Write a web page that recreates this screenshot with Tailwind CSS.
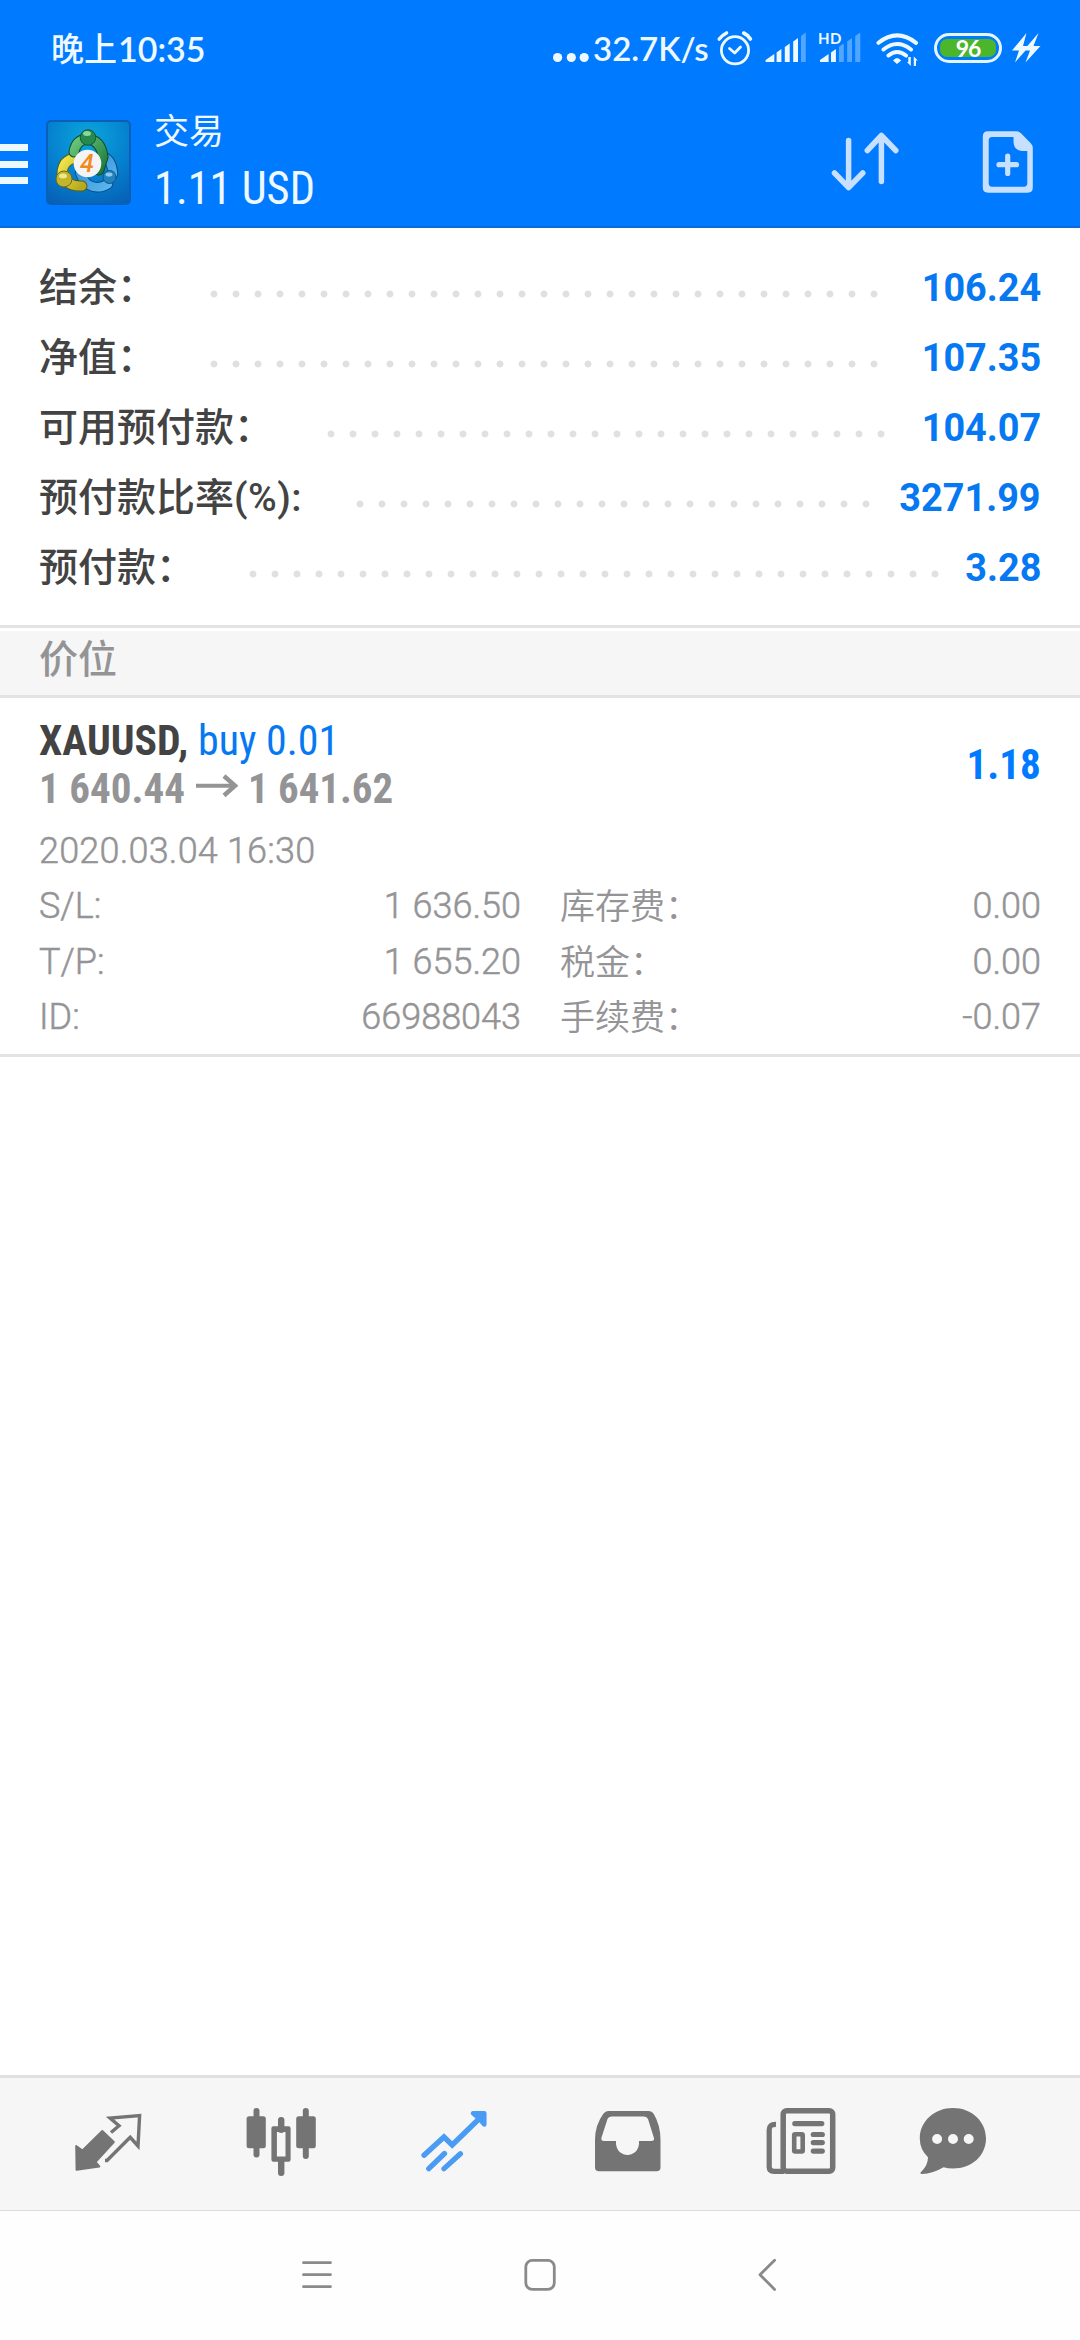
<!DOCTYPE html>
<html lang="zh-CN">
<head>
<meta charset="utf-8">
<title>交易</title>
<script src="https://cdn.jsdelivr.net/npm/@tailwindcss/browser@4"></script>
</head>
<body class="w-[1080px] h-[2340px] overflow-hidden bg-white flex flex-col font-['Roboto','Noto_Sans_CJK_SC',sans-serif] text-[#949496]">

<header class="h-[228px] shrink-0 bg-[#007aff] border-b-2 border-[#0c6ad6] text-[#eef8ff] flex flex-col">
  <!-- system status bar -->
  <div class="h-[98px] flex items-start pt-[28px]">
    <div class="ml-[51px] w-[160px] h-[40px] flex whitespace-nowrap leading-[40px]">
      <span class="w-[67px] text-[33px] font-medium font-['Noto_Sans_CJK_SC',sans-serif] leading-[38px]">晚上</span>
      <span class="text-[34px] font-['Lato',sans-serif] font-semibold leading-[41px]">10:35</span>
    </div>
    <svg class="ml-[341px] w-[40px] h-[40px]" viewBox="552 28 40 40" fill="currentColor"><circle cx="557.6" cy="57.5" r="4.6"/><circle cx="571.3" cy="57.5" r="4.6"/><circle cx="584.2" cy="57.5" r="4.6"/></svg>
    <span class="ml-[1px] w-[123px] text-[33px] leading-[41px] font-['Lato',sans-serif] font-semibold whitespace-nowrap">32.7K/s</span>
    <svg class="w-[40px] h-[40px]" viewBox="716 28 40 40" fill="none" stroke="currentColor" stroke-width="2.8" stroke-linecap="round" stroke-linejoin="round"><circle cx="735" cy="50.3" r="13.6"/><path d="M729.500 48.500L734.700 53L740.500 47"/><path stroke-width="3.6" d="M719.300 39Q722.500 35 726.500 33M743.700 33Q748 35 750.400 39"/></svg>
    <svg class="ml-[6px] w-[48px] h-[40px]" viewBox="762 28 48 40" fill="currentColor"><path d="M765.600 62V60L774.300 54V62ZM776.600 62V52.500L781.400 49V62ZM784.800 62V47L789.700 43.500V62ZM793.200 62V41.500L798 38V62Z"/><path opacity=".35" d="M801 62V36L805.800 32.500V62Z"/></svg>
    <div class="relative ml-[6px] w-[48px] h-[40px]">
      <svg class="w-[48px] h-[40px]" viewBox="816 28 48 40" fill="currentColor"><path d="M820 62V60L828.600 54V62ZM831 62V52.500L835.900 49V62Z"/><path opacity=".35" d="M839 62V46.500L843.800 43.500V62ZM847.200 62V41.500L852 38V62ZM855.200 62V36L860.300 32.500V62Z"/></svg>
      <span class="absolute left-[2px] top-[2px] text-[15px] leading-[16px] tracking-[.5px] font-bold font-['Lato',sans-serif]">HD</span>
    </div>
    <svg class="ml-[8px] w-[52px] h-[40px]" viewBox="872 28 52 40" fill="none" stroke="currentColor" stroke-width="4" stroke-linecap="round"><path d="M878.500 42.800Q897 28 916 42.800M883.500 49.500Q897 38.500 911 49.500M888.500 55.500Q897 48.500 906 55.500"/><path fill="currentColor" stroke="none" d="M893 60.500Q897 55.500 901.200 60.500L897 64ZM908.300 57H910.800V66L907 62H908.300ZM913.800 66V56.500L917.800 60.500H916V66Z"/></svg>
    <div class="ml-[10px] mt-[5px] w-[68px] h-[30px] rounded-full border-[3.5px] border-[#e4f5ff] p-[3px] flex">
      <div class="flex-1 rounded-[7px] bg-[#4bb52c] flex items-center justify-center text-[23px] leading-none tracking-[-1px] font-bold font-['Lato',sans-serif] text-white">96</div>
    </div>
    <svg class="ml-[6px] w-[36px] h-[40px]" viewBox="1008 28 36 40" fill="currentColor"><path d="M1026.500 33L1012 50.500H1019L1015 62.500L1029.500 46H1023ZM1038.500 33L1023.500 50.500H1030L1025.500 62.500L1040.500 46H1033.500Z"/></svg>
  </div>
  <!-- app bar -->
  <div class="flex items-start">
    <div class="mt-[46px] w-[28px] flex flex-col gap-[9.500px]"><i class="h-[7px] bg-current"></i><i class="h-[7px] bg-current"></i><i class="h-[7px] bg-current"></i></div>
    <div class="relative ml-[17.500px] mt-[22px] w-[85px] h-[85px]">
      <svg class="w-[85px] h-[85px]" viewBox="0 0 85 85">
        <defs>
          <radialGradient id="sky" cx=".5" cy=".2" r=".9"><stop offset="0" stop-color="#0ba6dc"/><stop offset=".55" stop-color="#0580cf"/><stop offset="1" stop-color="#0760b4"/></radialGradient>
          <linearGradient id="gr" x1="0" y1="0" x2="1" y2="1"><stop offset="0" stop-color="#6cc87a"/><stop offset="1" stop-color="#1d7a3e"/></linearGradient>
          <linearGradient id="ye" x1="0" y1="0" x2="1" y2="1"><stop offset="0" stop-color="#f3e84e"/><stop offset="1" stop-color="#b8a820"/></linearGradient>
          <linearGradient id="bl" x1="0" y1="0" x2="1" y2="1"><stop offset="0" stop-color="#2f8cd6"/><stop offset="1" stop-color="#5cb8f0"/></linearGradient>
        </defs>
        <rect x="1" y="1" width="83" height="83" rx="4" fill="url(#sky)" stroke="#0a5fb8" stroke-width="2"/>
        <g fill="none" stroke-linecap="round">
          <path d="M58 37Q66 40 67 54M62 64Q52 70 43 65Q37 61 34 53" stroke="#0b4a80" stroke-width="10.500"/>
          <path d="M58 37Q66 40 67 54M62 64Q52 70 43 65Q37 61 34 53" stroke="url(#bl)" stroke-width="8.500"/>
          <path d="M29 38Q17 40 16 53Q20 67 36 66" stroke="#55601a" stroke-width="11"/>
          <path d="M29 38Q17 40 16 53Q20 67 36 66" stroke="url(#ye)" stroke-width="9"/>
          <path d="M28 32Q30 20 41 19Q55 20 57 37L53 50" stroke="#0d4a2c" stroke-width="11"/>
          <path d="M28 32Q30 20 41 19Q55 20 57 37L53 50" stroke="url(#gr)" stroke-width="9"/>
        </g>
        <circle cx="42" cy="17.500" r="7.800" fill="#268a4e" stroke="#115a35"/><ellipse cx="41" cy="13.500" rx="4" ry="2.500" fill="#8bd6a0"/>
        <circle cx="18" cy="59" r="8" fill="#c3b52b" stroke="#6f6b1c"/><ellipse cx="17" cy="56" rx="4" ry="2.500" fill="#eee88a"/>
        <circle cx="63.500" cy="57" r="6.500" fill="#2283bd" stroke="#0e568c"/><ellipse cx="63" cy="54.500" rx="3.500" ry="2" fill="#8cc9ec"/>
        <circle cx="41.500" cy="43.500" r="13.800" fill="#f4f4f4"/>
      </svg>
      <span class="absolute left-[28px] top-[31px] w-[27px] h-[26px] text-center text-[25px] leading-[26px] italic font-medium text-[#f08a1e]">4</span>
    </div>
    <div class="ml-[23.500px] mt-[8px] w-[240px] flex flex-col">
      <span class="h-[46px] leading-[46px] text-[35px] font-['Noto_Sans_CJK_SC',sans-serif]">交易</span>
      <span class="mt-[10px] h-[52px] leading-[52px] text-[46.500px] font-['Roboto_Condensed',sans-serif] whitespace-nowrap origin-left scale-x-[.955]">1.11 USD</span>
    </div>
    <svg class="ml-[434px] mt-[30px] w-[76px] h-[68px] text-[#c8e0ff]" viewBox="828 128 76 68" fill="none" stroke="currentColor" stroke-width="5.500" stroke-linecap="round" stroke-linejoin="round"><path d="M848.600 140.500V187.500M834.500 173L848.600 187.500L862.800 173M881.400 181.500V135.500M867.300 150.500L881.400 135.500L895.800 150.500"/></svg>
    <svg class="ml-[74px] mt-[30px] w-[60px] h-[68px] text-[#c8e0ff]" viewBox="978 128 60 68" fill="currentColor"><path fill-rule="evenodd" d="M988 131.300H1016.500Q1019 131.300 1021 133.300L1031 143.500Q1032.800 145.500 1032.800 148V187.500Q1032.800 192.700 1027.600 192.700H988Q982.800 192.700 982.800 187.500V136.500Q982.800 131.300 988 131.300ZM992 137Q988.700 137 988.700 140.500V183Q988.700 186.700 992 186.700H1024Q1027.300 186.700 1027.300 183V151H1022Q1013.500 150 1013.500 141.500V137Z"/><path fill="none" stroke="currentColor" stroke-width="5.200" stroke-linecap="round" d="M1007.700 156V173.500M999 164.700H1016.500"/></svg>
  </div>
</header>

<!-- account summary -->
<section class="h-[397px] shrink-0 pt-[25px] px-[39px] text-[39px] text-[#434343] font-medium">
  <div class="h-[70px] flex items-center">
    <span class="w-[163.500px] mb-[8px] whitespace-nowrap leading-[56px] font-['Noto_Sans_CJK_SC',sans-serif]">结余：</span>
    <i class="w-[682px] h-[12px] mt-[12px] bg-[radial-gradient(circle,#e0e0e0_3px,transparent_3.900px)] bg-[length:22px_12px]"></i>
    <b class="ml-auto font-bold text-[#0578f2] leading-[70px] origin-right scale-x-[.97]">106.24</b>
  </div>
  <div class="h-[70px] flex items-center">
    <span class="w-[163.500px] mb-[8px] whitespace-nowrap leading-[56px] font-['Noto_Sans_CJK_SC',sans-serif]">净值：</span>
    <i class="w-[682px] h-[12px] mt-[12px] bg-[radial-gradient(circle,#e0e0e0_3px,transparent_3.900px)] bg-[length:22px_12px]"></i>
    <b class="ml-auto font-bold text-[#0578f2] leading-[70px] origin-right scale-x-[.97]">107.35</b>
  </div>
  <div class="h-[70px] flex items-center">
    <span class="w-[280.500px] mb-[8px] whitespace-nowrap leading-[56px] font-['Noto_Sans_CJK_SC',sans-serif]">可用预付款：</span>
    <i class="w-[572px] h-[12px] mt-[12px] bg-[radial-gradient(circle,#e0e0e0_3px,transparent_3.900px)] bg-[length:22px_12px]"></i>
    <b class="ml-auto font-bold text-[#0578f2] leading-[70px] origin-right scale-x-[.97]">104.07</b>
  </div>
  <div class="h-[70px] flex items-center">
    <span class="w-[309.500px] mb-[8px] whitespace-nowrap h-[56px] leading-[56px] font-['Noto_Sans_CJK_SC',sans-serif]">预付款比率<span class="font-['Roboto',sans-serif] leading-none tracking-[.5px]">(%):</span></span>
    <i class="w-[528px] h-[12px] mt-[12px] bg-[radial-gradient(circle,#e0e0e0_3px,transparent_3.900px)] bg-[length:22px_12px]"></i>
    <b class="ml-auto font-bold text-[#0578f2] leading-[70px] origin-right scale-x-[.97]">3271.99</b>
  </div>
  <div class="h-[70px] flex items-center">
    <span class="w-[202.500px] mb-[8px] whitespace-nowrap leading-[56px] font-['Noto_Sans_CJK_SC',sans-serif]">预付款：</span>
    <i class="w-[704px] h-[12px] mt-[12px] bg-[radial-gradient(circle,#e0e0e0_3px,transparent_3.900px)] bg-[length:22px_12px]"></i>
    <b class="ml-auto font-bold text-[#0578f2] leading-[70px] origin-right scale-x-[.97]">3.28</b>
  </div>
</section>

<div class="h-[73px] shrink-0 border-y-[3px] border-[#e3e3e3] pt-[3px]">
  <div class="h-full bg-[#f6f6f6] pl-[39px] text-[39px] leading-[50px] font-medium font-['Noto_Sans_CJK_SC',sans-serif]">价位</div>
</div>

<!-- open position -->
<section class="h-[359px] shrink-0 border-b-[3px] border-[#e3e3e3] pt-[18px] px-[39px]">
  <div class="flex items-center h-[96px] text-[43px] leading-[48px] font-bold whitespace-nowrap font-['Roboto_Condensed',sans-serif]">
    <div class="w-[500px]">
      <div class="flex h-[48px]"><span class="w-[159px] text-[#434343]"><span class="inline-block origin-left scale-x-[.97]">XAUUSD,</span></span><span class="font-normal text-[#0578f2] origin-left scale-x-[.975]">buy 0.01</span></div>
      <div class="flex h-[48px]"><span class="w-[155px]"><span class="inline-block origin-left scale-x-[.955]">1 640.44</span></span>
        <svg class="w-[46px] h-[48px]" viewBox="194 764 46 48" fill="none" stroke="currentColor" stroke-width="4"><path d="M196 785.800H236"/><path stroke-width="4.500" d="M224 776L235 785.800L224 795.500"/></svg>
        <span class="ml-[7.500px] inline-block origin-left scale-x-[.95]">1 641.62</span></div>
    </div>
    <span class="ml-auto text-[#007aff] origin-right scale-x-[.955]">1.18</span>
  </div>
  <div class="mt-[11px] h-[56px] leading-[56px] text-[36px] font-light tracking-[.2px] [-webkit-text-stroke:.5px]">2020.03.04 16:30</div>
  <div class="grid grid-cols-[482px_1fr] gap-x-[39px] auto-rows-[55.500px] text-[36px] leading-[55px] font-light [-webkit-text-stroke:.5px]">
    <div class="flex justify-between"><span>S/L:</span><span>1 636.50</span></div>
    <div class="flex justify-between"><span class="text-[35px] leading-[50px] font-[350] font-['Noto_Sans_CJK_SC',sans-serif] [-webkit-text-stroke:0]">库存费：</span><span>0.00</span></div>
    <div class="flex justify-between"><span>T/P:</span><span>1 655.20</span></div>
    <div class="flex justify-between"><span class="text-[35px] leading-[50px] font-[350] font-['Noto_Sans_CJK_SC',sans-serif] [-webkit-text-stroke:0]">税金：</span><span>0.00</span></div>
    <div class="flex justify-between"><span>ID:</span><span>66988043</span></div>
    <div class="flex justify-between"><span class="text-[35px] leading-[50px] font-[350] font-['Noto_Sans_CJK_SC',sans-serif] [-webkit-text-stroke:0]">手续费：</span><span>-0.07</span></div>
  </div>
</section>

<div class="flex-1"></div>

<!-- tab bar -->
<nav class="h-[136px] shrink-0 bg-[#f6f6f6] border-t-[3px] border-b border-t-[#e0e0e0] border-b-[#dcdcdc] flex items-start pt-[22px] text-[#747474]">
  <svg class="ml-[68px] w-[80px] h-[80px]" viewBox="68 2100 80 80" fill="none" stroke="currentColor" stroke-width="3.400" stroke-linejoin="round"><path fill="currentColor" stroke-width="2" d="M76.200 2146L82.500 2150.500L102.300 2131L113.800 2142L95.500 2162L99.300 2166.500L76.600 2169.800Z"/><path stroke-linejoin="miter" d="M111 2132.500L119 2125.700L110 2118L139.600 2115.500L138 2146L130.200 2137.300L107 2160.500H105"/></svg>
  <svg class="ml-[92px] w-[80px] h-[80px]" viewBox="240 2100 80 80" fill="currentColor"><rect x="253.500" y="2108" width="6" height="49.500" rx="3"/><rect x="246.600" y="2116.300" width="19.200" height="32" rx="2.500"/><rect x="278" y="2117" width="6.400" height="16" rx="3"/><rect x="278" y="2157" width="6.400" height="19" rx="3"/><path fill-rule="evenodd" d="M273.400 2126.300H288.600Q290.600 2126.300 290.600 2128.300V2159.700Q290.600 2161.700 288.600 2161.700H273.400Q271.400 2161.700 271.400 2159.700V2128.300Q271.400 2126.300 273.400 2126.300ZM276.900 2132V2156.500H285.500V2132Z"/><rect x="302.800" y="2108" width="6" height="51" rx="3"/><rect x="296.200" y="2116.300" width="19.600" height="32" rx="2.500"/></svg>
  <svg class="ml-[95px] w-[80px] h-[80px] text-[#4a9bf4]" viewBox="415 2100 80 80" fill="none" stroke="currentColor" stroke-width="5.300" stroke-linecap="round"><path d="M424 2155.300L444 2137L452.200 2145L482 2116"/><path d="M428.800 2168.600L444.500 2153.500M444 2168.600L460.400 2153.800"/><path stroke-linejoin="round" stroke-width="4.500" fill="currentColor" d="M473 2113.300H484.300V2124.500L480 2119.500L478 2117.500Z"/></svg>
  <svg class="ml-[93px] w-[80px] h-[80px]" viewBox="588 2100 80 80" fill="currentColor"><path fill-rule="evenodd" d="M608 2111H649Q652 2111 653.500 2113.500Q660.500 2125 660.500 2140V2167.500Q660.500 2171.300 656.500 2171.300H599Q595 2171.300 595 2167.500V2140Q595 2125 603.500 2113.500Q605.500 2111 608 2111ZM612 2116.500Q608.500 2116.500 607.500 2119L601.500 2137.500Q600.700 2141 604 2141H616V2144C617.500 2158.500 637.500 2158.500 639 2144V2141H651Q655 2141 653.800 2137.500L648 2119Q647 2116.500 644 2116.500Z"/></svg>
  <svg class="ml-[93px] w-[80px] h-[80px]" viewBox="761 2100 80 80" fill="none" stroke="currentColor"><rect x="783.200" y="2110.700" width="49.500" height="60.600" rx="3.500" stroke-width="5.500"/><path stroke-width="5.200" d="M776 2124.300Q769.200 2124 769.200 2130V2167Q769.200 2171.400 774 2171.400H784"/><rect x="794.200" y="2134.200" width="8.500" height="17.300" rx="1" stroke-width="4.600"/><path stroke-width="5.200" stroke-linecap="round" d="M794.800 2123.600H821.800M813.300 2134.500H822.300M813.300 2142.600H822.300M813.300 2151.100H822.300"/></svg>
  <svg class="ml-[72px] w-[80px] h-[80px]" viewBox="913 2100 80 80" fill="currentColor"><path fill-rule="evenodd" d="M953 2108C972 2108 986 2121.500 986 2138.500S972 2168.500 953 2168.500Q948 2168.500 943.500 2167.200Q933 2173.500 922 2174Q919 2173.500 921.500 2171.500Q928 2165 928 2157.200Q919.800 2149.500 919.800 2138.500C919.800 2121.500 934 2108 953 2108ZM937.100 2134A5 5 0 1 0 937.100 2144A5 5 0 1 0 937.100 2134ZM953 2134A5 5 0 1 0 953 2144A5 5 0 1 0 953 2134ZM968.700 2134A5 5 0 1 0 968.700 2144A5 5 0 1 0 968.700 2134Z"/></svg>
</nav>

<!-- system navigation -->
<div class="h-[129px] shrink-0 bg-[#fefefe] flex items-start pt-[43px] text-[#8a8a8a]">
  <svg class="ml-[297px] w-[40px] h-[40px]" viewBox="297 2254 40 40" fill="none" stroke="currentColor" stroke-width="2.800" stroke-linecap="round"><path d="M303.500 2262.700H330.500M303.500 2274.700H330.500M303.500 2286.700H330.500"/></svg>
  <svg class="ml-[183px] w-[40px] h-[40px]" viewBox="520 2254 40 40" fill="none" stroke="currentColor" stroke-width="2.800"><rect x="525.800" y="2260.400" width="28.500" height="28.900" rx="6.500"/></svg>
  <svg class="ml-[187px] w-[40px] h-[40px]" viewBox="747 2254 40 40" fill="none" stroke="currentColor" stroke-width="2.800" stroke-linecap="round" stroke-linejoin="round"><path d="M774.600 2260.300L760 2274.800L774.600 2289.400"/></svg>
</div>
</body>
</html>
